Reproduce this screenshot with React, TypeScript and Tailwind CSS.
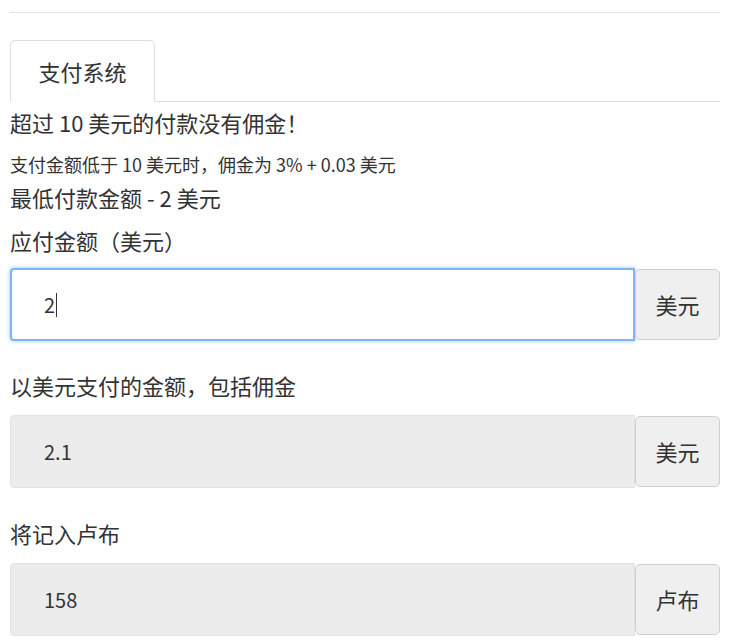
import React from "react";

const font = { fontFamily: '"Noto Sans CJK SC", "Noto Sans", sans-serif' };

function Field({ value, unit, focused }: { value: string; unit: string; focused?: boolean }) {
  return (
    <div className="flex h-[73px] items-stretch">
      <div
        className={
          focused
            ? "flex flex-1 items-center rounded-l-[4px] border-2 border-[#80b3f0] bg-white pl-[32px] text-[20px] text-[#333] shadow-[0_0_4px_rgba(102,175,233,0.7)]"
            : "flex flex-1 items-center rounded-l-[4px] border border-[#e3e3e3] bg-[#ececec] pl-[33px] text-[20px] text-[#333]"
        }
      >
        <span>{value}</span>
        {focused && <span className="ml-[1px] inline-block h-[24px] w-[1px] bg-[#333]" />}
      </div>
      <div className="my-[1px] flex w-[85px] items-center justify-center rounded-[5px] border border-[#cfcfcf] bg-[#efefef] text-[22px] text-[#333]">
        {unit}
      </div>
    </div>
  );
}

export default function App() {
  return (
    <div className="min-h-[644px] w-[736px] bg-white text-[#333]" style={font}>
      <div className="pl-[10px] pr-[16px] pt-[12px]">
        <div className="border-t border-[#e2e2e2]" />
        <div className="mt-[27px] flex border-b border-[#dddddd]">
          <div className="-mb-[1px] flex h-[62px] w-[145px] items-center justify-center rounded-t-[5px] border border-b-white border-[#dddddd] bg-white text-[22px]">
            支付系统
          </div>
        </div>
        <div className="h-[40px] text-[22px] leading-[40px]">超过 10 美元的付款没有佣金！</div>
        <div className="mt-[10px] text-[18px] leading-[24px]">支付金额低于 10 美元时，佣金为 3% + 0.03 美元</div>
        <div className="mt-[7px] text-[22px] leading-[28px]">最低付款金额 - 2 美元</div>
        <div className="mt-[15px] text-[22px] leading-[28px]">应付金额（美元）</div>
        <div className="mt-[14px]">
          <Field value="2" unit="美元" focused />
        </div>
        <div className="mt-[30px] text-[22px] leading-[28px]">以美元支付的金额，包括佣金</div>
        <div className="mt-[16px]">
          <Field value="2.1" unit="美元" />
        </div>
        <div className="mt-[31px] text-[22px] leading-[28px]">将记入卢布</div>
        <div className="mt-[16px]">
          <Field value="158" unit="卢布" />
        </div>
      </div>
    </div>
  );
}
